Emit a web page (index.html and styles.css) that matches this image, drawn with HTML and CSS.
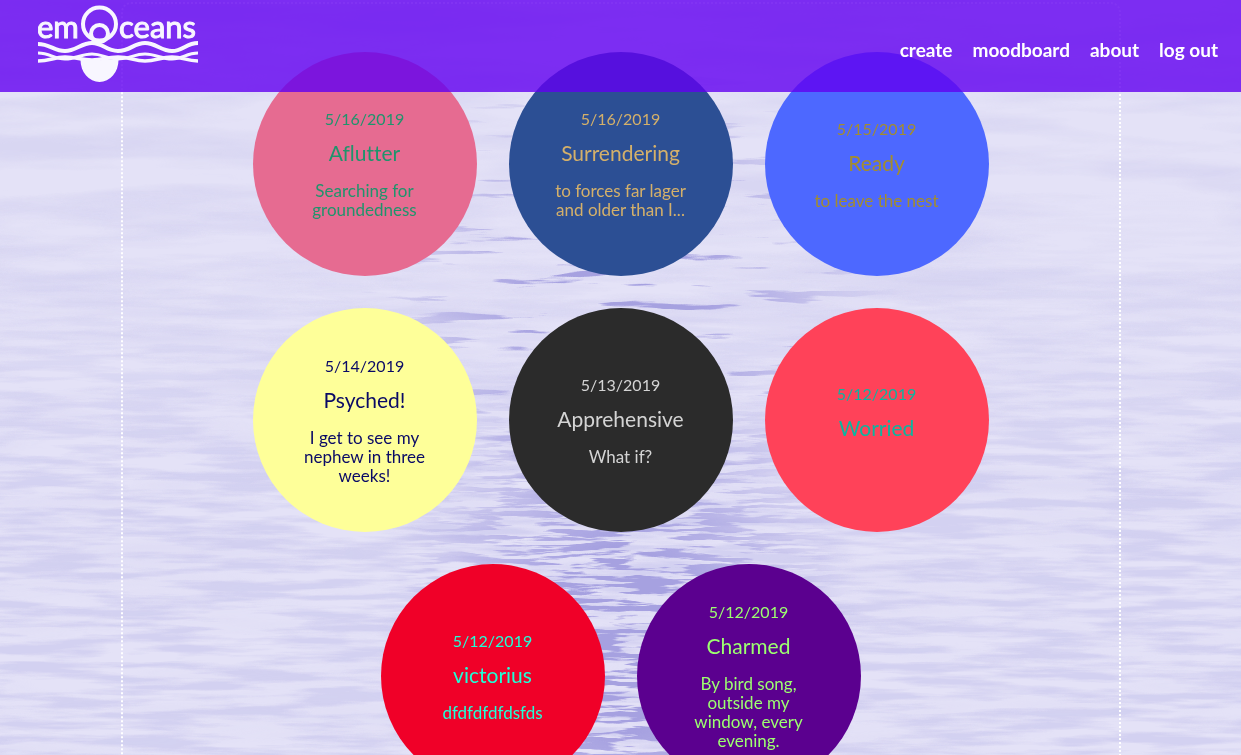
FILE: index.html
```html
<!DOCTYPE html>
<html lang="en">
<head>
<meta charset="utf-8">
<meta name="viewport" content="width=device-width, initial-scale=1">
<title>emOceans</title>
<link rel="stylesheet" href="styles.css">
</head>
<body>
<svg class="water" aria-hidden="true" viewBox="0 0 1241 755" preserveAspectRatio="none">
  <defs>
    <filter id="swell" x="0" y="0" width="100%" height="100%" color-interpolation-filters="sRGB">
      <feTurbulence type="fractalNoise" baseFrequency="0.004 0.03" numOctaves="4" seed="8"/>
      <feColorMatrix values="0 0 0 0 0.80  0 0 0 0 0.79  0 0 0 0 0.93  3 0 0 0 -1.2"/>
    </filter>
    <filter id="chop" x="0" y="0" width="100%" height="100%" color-interpolation-filters="sRGB">
      <feTurbulence type="fractalNoise" baseFrequency="0.01 0.11" numOctaves="4" seed="3"/>
      <feColorMatrix values="0 0 0 0 0.79  0 0 0 0 0.78  0 0 0 0 0.93  4 0 0 0 -1.6"/>
    </filter>
    <filter id="streaks" x="0" y="0" width="100%" height="100%" color-interpolation-filters="sRGB">
      <feTurbulence type="fractalNoise" baseFrequency="0.008 0.09" numOctaves="4" seed="21"/>
      <feColorMatrix values="0 0 0 0 0.65  0 0 0 0 0.63  0 0 0 0 0.88  14 0 0 0 -8.8"/>
    </filter>
    <filter id="ripples" x="0" y="0" width="100%" height="100%" color-interpolation-filters="sRGB">
      <feTurbulence type="fractalNoise" baseFrequency="0.016 0.17" numOctaves="4" seed="5"/>
      <feColorMatrix values="0 0 0 0 0.65  0 0 0 0 0.63  0 0 0 0 0.88  11 0 0 0 -5.2"/>
    </filter>
    <linearGradient id="down" x1="0" y1="0" x2="0" y2="1">
      <stop offset="0.25" stop-color="#000"/><stop offset="0.65" stop-color="#fff"/>
    </linearGradient>
    <linearGradient id="up" x1="0" y1="0" x2="0" y2="1">
      <stop offset="0.3" stop-color="#fff"/><stop offset="0.8" stop-color="#333"/>
    </linearGradient>
    <radialGradient id="glow">
      <stop offset="0.3" stop-color="#fff"/><stop offset="1" stop-color="#000"/>
    </radialGradient>
    <mask id="near"><rect width="1241" height="755" fill="url(#down)"/></mask>
    <mask id="far"><rect width="1241" height="755" fill="url(#up)"/></mask>
    <mask id="middle"><ellipse cx="620" cy="300" rx="280" ry="260" fill="url(#glow)"/></mask>
    <mask id="path"><ellipse cx="620" cy="640" rx="245" ry="310" fill="url(#glow)"/></mask>
  </defs>
  <g mask="url(#far)"><rect width="1241" height="755" filter="url(#swell)" opacity="0.5"/></g>
  <g mask="url(#near)"><rect width="1241" height="755" filter="url(#chop)" opacity="0.6"/></g>
  <g mask="url(#middle)"><rect width="1241" height="755" filter="url(#streaks)"/></g>
  <g mask="url(#path)"><rect width="1241" height="755" filter="url(#ripples)"/></g>
</svg>

<header class="site-header">
  <a class="logo" href="#" aria-label="emOceans home">
    <svg width="160" height="80" viewBox="38 4 160 80" fill="none" stroke="#f8f6ff" stroke-width="4">
      <circle cx="99.500" cy="24" r="16.500"/>
      <circle cx="99.500" cy="33.500" r="8.500"/>
      <path d="M38 44C50 44 54 51 65 51S81 43 92 43s14 8 26 8 16-8 27-8 16 8 27 8 14-8 26-8"/>
      <path d="M38 53C50 53 54 59 65 59S81 54 92 54s14 5 26 5 16-5 27-5 16 5 27 5 14-6 26-6" stroke-width="3"/>
      <path d="M38 61C50 61 54 57 65 57S81 60 92 60s14-3 26-3 16 4 27 4 16-4 27-4 14 4 26 4" stroke-width="3.500"/>
      <path d="M80.500 60a19 22 0 0 0 38 0l-11-1q-8 2-15 1l-7-2z" fill="#f8f6ff" stroke="none"/>
      <text class="logo-text" x="37" y="38">em</text>
      <text class="logo-text" x="119" y="38">ceans</text>
    </svg>
  </a>
  <nav class="site-nav">
    <a href="#">create</a>
    <a href="#">moodboard</a>
    <a href="#">about</a>
    <a href="#">log out</a>
  </nav>
</header>

<main class="board">
  <article class="mood flutter"><time>5/16/2019</time><h2>Aflutter</h2><p>Searching for groundedness</p></article>
  <article class="mood surrender"><time>5/16/2019</time><h2>Surrendering</h2><p>to forces far lager and older than I...</p></article>
  <article class="mood ready"><time>5/15/2019</time><h2>Ready</h2><p>to leave the nest</p></article>
  <article class="mood psyched"><time>5/14/2019</time><h2>Psyched!</h2><p>I get to see my nephew in three weeks!</p></article>
  <article class="mood apprehensive"><time>5/13/2019</time><h2>Apprehensive</h2><p>What if?</p></article>
  <article class="mood worried"><time>5/12/2019</time><h2>Worried</h2><p></p></article>
  <article class="mood victorious"><time>5/12/2019</time><h2>victorius</h2><p>dfdfdfdfdsfds</p></article>
  <article class="mood charmed"><time>5/12/2019</time><h2>Charmed</h2><p>By bird song, outside my window, every evening.</p></article>
</main>
</body>
</html>
```
FILE: styles.css
```css
* { box-sizing: border-box; }

html { scrollbar-width: none; }

body {
  margin: 0;
  padding-top: 2px;
  background: #e4e2f7;
  font-family: Lato, "Open Sans", sans-serif;
  font-size: 17px;
  font-variant-ligatures: none;
  line-height: 19px;
}

.water {
  position: fixed;
  inset: 0;
  z-index: -1;
  width: 100%;
  height: 100%;
}

.site-header {
  position: fixed;
  top: 0;
  left: 0;
  right: 0;
  z-index: 1;
  display: flex;
  align-items: center;
  justify-content: space-between;
  padding: 4px 23px 8px 38px;
  background: rgba(98, 0, 240, 0.8);
}

.logo svg { display: block; }

.logo-text {
  font-family: Lato, sans-serif;
  font-size: 31px;
  fill: #f8f6ff;
  stroke: #f8f6ff;
  stroke-width: 1px;
}

.site-nav {
  display: flex;
  gap: 20px;
  padding-top: 12px;
}

.site-nav a {
  color: #fff;
  font-size: 19px;
  font-weight: 700;
  line-height: 24px;
  text-decoration: none;
}

.board {
  display: flex;
  flex-wrap: wrap;
  justify-content: center;
  gap: 32px;
  max-width: 1000px;
  margin: 0 auto;
  padding: 48px 16px;
  border: 2px dotted #fff;
  border-radius: 10px;
}

.mood {
  display: flex;
  flex-direction: column;
  align-items: center;
  justify-content: center;
  width: 224px;
  height: 224px;
  padding: 0 40px;
  border-radius: 50%;
  text-align: center;
}

.mood time { font-size: 16px; }

.mood h2 {
  margin: 12px 0 15px;
  font-size: 21px;
  font-weight: 400;
  line-height: 26px;
}

.mood p { margin: 0; }

.flutter { background: #e66b91; color: #1f946c; }
.surrender { background: #2c4f94; color: #d4b06a; }
.ready { background: #4d68ff; color: #a38d2e; }
.psyched { background: #feff99; color: #0a0a66; }
.apprehensive { background: #2b2b2b; color: #d4d4d4; }
.worried { background: #ff4259; color: #0db5a0; }
.victorious { background: #f00028; color: #1fffd7; }
.charmed { background: #5b008f; color: #9dff70; }
```
